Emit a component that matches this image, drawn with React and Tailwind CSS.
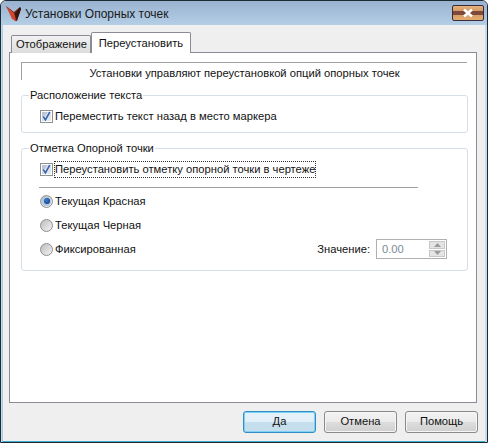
import React from "react";

const Check = () => (
  <span className="w-[13px] h-[13px] shrink-0 border border-[#8e8f8f] bg-white p-px flex">
    <span className="w-full h-full bg-gradient-to-br from-[#aebccd] to-[#eef1f5] flex">
      <svg width="9" height="9" viewBox="0 0 9 9" className="block overflow-visible">
        <path d="M1.2 4.6 L3.4 7.8 L7.8 0" fill="none" stroke="#ffffff" strokeWidth="3.2" opacity="0.7" />
        <path d="M1.2 4.6 L3.4 7.8 L7.8 0" fill="none" stroke="#3a66ad" strokeWidth="1.7" />
      </svg>
    </span>
  </span>
);

const Radio = ({ on }) => (
  <span className="w-[13px] h-[13px] shrink-0 rounded-full border border-[#8e8f8f] bg-gradient-to-br from-[#bdbdbd] to-[#f4f4f4] flex items-center justify-center">
    {on && (
      <span className="w-[9px] h-[9px] rounded-full bg-[#a9c6e6] flex items-center justify-center">
        <span className="w-[6px] h-[6px] rounded-full bg-[radial-gradient(circle_at_40%_35%,#3f7fd0,#0f2f6e)]" />
      </span>
    )}
  </span>
);

const Btn = ({ children, primary }) => (
  <button
    className={
      "w-[73px] h-[22px] rounded-[3px] border text-[#111] leading-none " +
      (primary
        ? "border-[#2f8ec4] bg-[linear-gradient(#e6f2f9_0%,#e1eff7_48%,#c5dfee_52%,#c4deec_100%)] shadow-[inset_0_0_0_1px_#7fd0f2]"
        : "border-[#8a8a8a] bg-[linear-gradient(#f2f2f2_0%,#ebebeb_48%,#dddddd_52%,#cfcfcf_100%)] shadow-[inset_0_0_0_1px_#f6f6f6]")
    }
  >
    {children}
  </button>
);

export default function App() {
  return (
    <div
      className="w-[488px] h-[443px] flex flex-col border border-[#1c2a33] rounded-t-[6px] bg-[#c5dcec] text-[11.2px] text-[#111] overflow-hidden"
      style={{ fontFamily: '"Liberation Sans", sans-serif' }}
    >
      {/* Title bar */}
      <div className="h-[24px] shrink-0 flex items-center pl-[5px] pr-[3px] bg-[linear-gradient(#99b3d0,#b4cee6)]">
        <svg width="17" height="16" viewBox="0 0 17 16" className="shrink-0 mt-[2px]">
          <path d="M0 0 L8 6 L14 1 L15 3 L11 15 L9 15 Z" fill="#6e1a12" />
          <path d="M0 0 L8 7 L10 15 L6 13 Z" fill="#cf4a2c" />
          <path d="M14 1 L15 3 L11 14 L9 8 Z" fill="#2e1712" />
        </svg>
        <span className="ml-[2px] pt-[1px] text-[12px] text-[#1a1a1a]">Установки Опорных точек</span>
        <div className="ml-auto w-[32px] h-[16px] rounded-[2px] border border-[#3a2a3a] flex items-center justify-center bg-[linear-gradient(#e8b27c_0%,#d49a64_35%,#7f4a3c_36%,#7f4a3c_65%,#d8a066_66%,#e2ac70_100%)]">
          <svg width="12" height="10" viewBox="0 0 12 10">
            <path d="M2 1.5 L10 8.5 M10 1.5 L2 8.5" stroke="#fff" strokeWidth="2.6" />
          </svg>
        </div>
      </div>

      {/* Client */}
      <div className="flex-1 ml-[1px] mr-[2px] bg-[#efefef] flex flex-col min-h-0 border-l border-[#a9cde6] border-b border-b-[#3fa9d2]">
        {/* Tabs */}
        <div className="flex items-end h-[27px] shrink-0 pl-[8px] relative z-10">
          <div className="w-[80px] h-[18px] -mb-px pl-[1px] border border-b-0 border-[#898c95] rounded-t-[2px] bg-[linear-gradient(#f2f2f2,#dcdcdc)] flex items-center justify-center">
            Отображение
          </div>
          <div className="w-[100px] h-[21px] -mb-px border border-b-0 border-[#898c95] rounded-t-[2px] bg-white flex items-center justify-center">
            Переустановить
          </div>
        </div>

        {/* Page */}
        <div className="ml-[6px] mr-[8px] h-[351px] shrink-0 border border-[#898c95] bg-white pl-[11px] pr-[8px] pt-[9px] flex flex-col">
          <div className="h-[18px] shrink-0 border-t border-l border-[#a0a0a0] mr-[1px] flex items-center justify-center pt-[3px]">
            Установки управляют переустановкой опций опорных точек
          </div>

          <fieldset className="mt-[7px] h-[46px] shrink-0 border border-[#d5dfe5] rounded-[3px] pl-[18px]">
            <legend className="-ml-[11px] px-[1px] pt-[1px] leading-[15px]">Расположение текста</legend>
            <label className="flex items-center gap-[2px] mt-[5px]">
              <Check />
              <span>Переместить текст назад в место маркера</span>
            </label>
          </fieldset>

          <fieldset className="mt-[7px] h-[131px] shrink-0 border border-[#d5dfe5] rounded-[3px] pl-[17px] pr-[49px]">
            <legend className="-ml-[10px] px-[1px] pt-[1px] leading-[15px]">Отметка Опорной точки</legend>
            <label className="flex items-center gap-[2px] mt-[6px] pl-[1px]">
              <Check />
              <span className="outline outline-1 outline-dotted outline-[#333] leading-[15px]">
                Переустановить отметку опорной точки в чертеже
              </span>
            </label>
            <div className="mt-[10px] h-px bg-[#a0a0a0]" />
            <div className="mt-[6px] flex flex-col gap-[10px] pl-[1px]">
              <label className="flex items-center gap-[2px] h-[14px]"><Radio on /><span>Текущая Красная</span></label>
              <label className="flex items-center gap-[2px] h-[14px]"><Radio /><span>Текущая Черная</span></label>
              <div className="flex items-center h-[14px]">
                <label className="flex items-center gap-[2px]"><Radio /><span>Фиксированная</span></label>
                <span className="ml-auto mr-[6px]">Значение:</span>
                <div className="w-[71px] h-[20px] -mr-[29px] border border-[#b0b0b0] bg-white flex items-center justify-between text-[#7a8a96] pl-[5px]">
                  <span>0.00</span>
                  <div className="w-[16px] h-[16px] mr-[1px] flex flex-col gap-[1px]">
                    <div className="flex-1 bg-[#e4e4e4] border border-[#c8c8c8] flex items-center justify-center">
                      <svg width="7" height="4" viewBox="0 0 7 4"><path d="M3.5 0 L7 4 H0 Z" fill="#9a9a9a" /></svg>
                    </div>
                    <div className="flex-1 bg-[#e4e4e4] border border-[#c8c8c8] flex items-center justify-center">
                      <svg width="7" height="4" viewBox="0 0 7 4"><path d="M0 0 H7 L3.5 4 Z" fill="#9a9a9a" /></svg>
                    </div>
                  </div>
                </div>
              </div>
            </div>
          </fieldset>
        </div>

        {/* Buttons */}
        <div className="flex-1 flex items-start justify-end gap-[8px] pt-[8px] pr-[7px]">
          <Btn primary>Да</Btn>
          <Btn>Отмена</Btn>
          <Btn>Помощь</Btn>
        </div>
      </div>
    </div>
  );
}
